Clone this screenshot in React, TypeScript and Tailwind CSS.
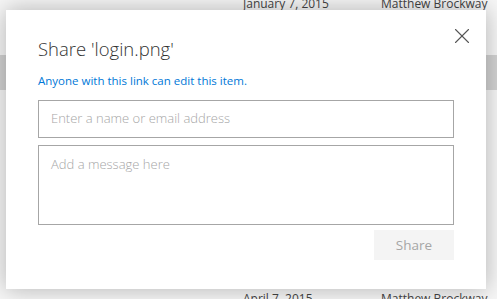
import { X } from "lucide-react";

export default function App() {
  return (
    <div
      className="relative w-[497px] h-[299px] overflow-hidden bg-[#f6f6f6] text-[#333]"
      style={{ fontFamily: '"Open Sans", "Noto Sans", sans-serif' }}
    >
      {/* list behind the dialog */}
      <div className="flex flex-col h-full">
        <div className="h-[60px] flex text-[12px] leading-[18px] text-[#444] -mt-[5px] whitespace-nowrap">
          <span className="ml-[243px] w-[138px]">January 7, 2015</span>
          <span>Matthew Brockway</span>
        </div>
        <div className="h-[35px] bg-[#d2d2d2]" />
        <div className="flex-1" />
        <div className="h-[9px] flex text-[12px] leading-[18px] text-[#444] whitespace-nowrap">
          <span className="ml-[243px] w-[138px]">April 7, 2015</span>
          <span>Matthew Brockway</span>
        </div>
      </div>

      {/* share dialog */}
      <div className="absolute left-[6px] top-[10px] w-[480px] h-[279px] bg-white shadow-[0_0_22px_rgba(0,0,0,0.28)] px-[32px]">
        <button className="absolute right-[11px] top-[13px] text-[#555]">
          <X size={26} strokeWidth={1} />
        </button>
        <h1 className="mt-[25px] text-[18.5px] leading-[28px] font-light text-[#333]">
          Share 'login.png'
        </h1>
        <p className="mt-[10px] text-[11.5px] leading-[16px] text-[#0078d7]">
          Anyone with this link can edit this item.
        </p>
        <div className="mt-[11px] h-[38px] border border-[#a6a6a6] px-[12px] flex items-center">
          <span className="text-[13px] font-light text-[#a6a6a6]">Enter a name or email address</span>
        </div>
        <div className="mt-[7px] h-[80px] border border-[#a6a6a6] px-[12px] pt-[5px]">
          <span className="text-[13px] font-light text-[#a6a6a6]">Add a message here</span>
        </div>
        <div className="mt-[5px] flex justify-end">
          <div className="w-[80px] h-[30px] bg-[#f4f4f4] flex items-center justify-center text-[13.5px] text-[#a6a6a6]">
            Share
          </div>
        </div>
      </div>
    </div>
  );
}
